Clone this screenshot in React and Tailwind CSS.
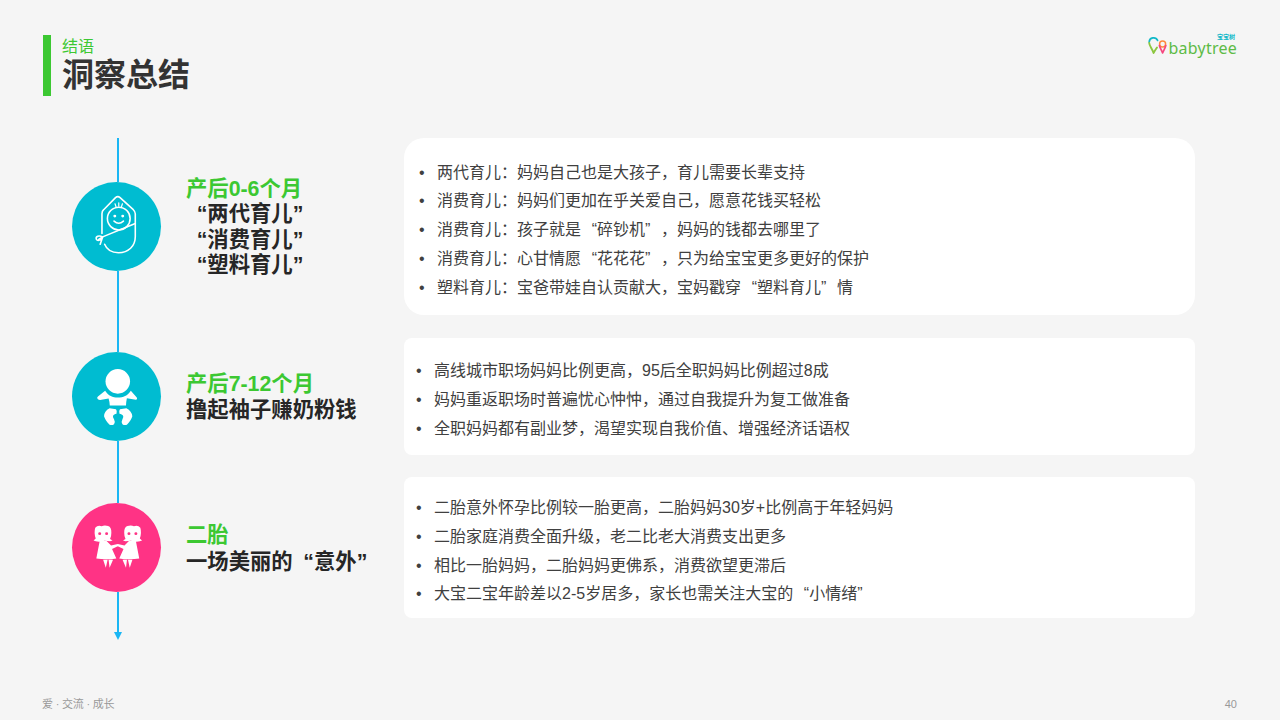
import React from 'react';

const SwaddleIcon = () => (
  <svg viewBox="0 0 90 90" className="w-full h-full" fill="none" stroke="#fff" strokeWidth="1.6" strokeLinecap="round" strokeLinejoin="round">
    <path d="M30.3 52 V32 Q30.3 29.5 32 28 L44 15.8 Q46.3 13.8 48.6 15.8 L62 28 Q64 30 64 32 V55 C64 65 57 71.5 47 71.5 C40 71.5 35 68 33 63" />
    <circle cx="47.3" cy="37" r="11.5" />
    <path d="M64 42 L31 55.5 L27 58" />
    <path d="M31 55.5 C27 53.5 24 55 24.5 57.5 C25 60 29 59.5 31 55.5 L28.5 63" />
    <path d="M42.5 39.5 Q47.3 44 52 39.5" />
    <path d="M43.5 22 L44.5 25 M47.3 21 V24.5 M51 22 L50 25" strokeWidth="1.2" />
    <circle cx="43.3" cy="34.5" r="0.7" fill="#fff" />
    <circle cx="51.3" cy="34.5" r="0.7" fill="#fff" />
  </svg>
);

const BabyIcon = () => (
  <svg viewBox="0 0 90 90" className="w-full h-full" fill="#fff">
    <circle cx="46.3" cy="29.7" r="12.4" />
    <path d="M33.5 39.2 C37 44.5 41 46 46.3 46 C52 46 56 44.5 59.5 39.2 L65.5 46 Q66.5 48 64.5 48.2 L55.5 46.8 Q54.8 50 54.6 54.2 H38.2 Q38 50 37 47 L28.5 48.5 Q25.5 48.5 25.5 46 Q26 44.8 27.5 44 Z" />
    <path d="M38 57 L44.5 58 Q46 60 45 62.5 C41.5 63 40.5 65 42.5 68 Q44 70.5 42.5 73 Q40.5 74.5 38 73.5 C35 71 33 67 32.4 65 Q32.5 60 38 57 Z" />
    <path d="M55 57 L48.5 58 Q47 60 48 62.5 C51.5 63 53 65 51 68 Q49.5 70.5 51 73 Q53 74.5 55.5 73.5 C58.5 71 60.5 67 61 65 Q60.5 60 55 57 Z" />
  </svg>
);

const Girl = ({ flip }) => (
  <g transform={flip ? 'translate(92.6 0) scale(-1 1)' : undefined}>
    <path d="M23.5 25 Q26 22 30 23.5 Q33 22 36.5 23.3 Q40 24.5 39.8 30 Q39.8 34 38.5 36.5 L41 37.8 L38.5 38.8 L33 38.2 Q28 39.8 24 38.8 L21.8 37.8 L24 36 Q22 30 23.5 25 Z" fill="#fff" />
    <path d="M28 38.5 H35 L39.5 43 L46.3 41.5 L46.8 43.5 L40.5 46.5 L44.8 56 Q35 57.8 24.6 56.2 Z" fill="#fff" />
    <path d="M31.5 57.5 L36 57.5 L34.2 65.5 Z M37 57.5 L41.5 57.5 L38 65.5 Z" fill="#fff" />
    <ellipse cx="28" cy="31" rx="1.5" ry="1.3" fill="#ff3385" />
    <ellipse cx="35" cy="31" rx="1.5" ry="1.3" fill="#ff3385" />
  </g>
);

const GirlsIcon = () => (
  <svg viewBox="0 0 90 90" className="w-full h-full">
    <Girl />
    <Girl flip />
  </svg>
);

const LogoMark = () => (
  <svg viewBox="0 0 21 19" className="w-[21px] h-[19px] shrink-0" fill="none" strokeLinecap="round" strokeLinejoin="round">
    <path d="M1.2 6 A4.4 4.4 0 0 1 9.6 4.4" stroke="#11b8c8" strokeWidth="1.7" />
    <path d="M1.2 7 C1.6 10.5 4 12 5.6 17 C6.6 14.5 8 13 9 11.5" stroke="#8cc63f" strokeWidth="1.9" />
    <circle cx="14.6" cy="8" r="3" stroke="#ff8a3c" strokeWidth="1.5" />
    <path d="M11.4 9.5 C12 12 13.6 14 14.6 17 C15.8 14 17.2 12 17.8 9.5" stroke="#f6467f" strokeWidth="1.7" />
  </svg>
);

const stages = [
  {
    color: 'bg-[#00bcd1]',
    icon: <SwaddleIcon />,
    head: '产后0-6个月',
    lines: ['“两代育儿”', '“消费育儿”', '“塑料育儿”'],
    leading: 'leading-[25.5px]',
    card: 'h-[177px] rounded-[20px] pl-[15px]',
    items: [
      '两代育儿：妈妈自己也是大孩子，育儿需要长辈支持',
      '消费育儿：妈妈们更加在乎关爱自己，愿意花钱买轻松',
      '消费育儿：孩子就是“碎钞机”，妈妈的钱都去哪里了',
      '消费育儿：心甘情愿“花花花”，只为给宝宝更多更好的保护',
      '塑料育儿：宝爸带娃自认贡献大，宝妈戳穿“塑料育儿”情',
    ],
  },
  {
    color: 'bg-[#00bcd1]',
    icon: <BabyIcon />,
    head: '产后7-12个月',
    lines: ['撸起袖子赚奶粉钱'],
    leading: 'leading-[25.5px]',
    card: 'h-[117px] rounded-[8px] pl-[12px]',
    items: [
      '高线城市职场妈妈比例更高，95后全职妈妈比例超过8成',
      '妈妈重返职场时普遍忧心忡忡，通过自我提升为复工做准备',
      '全职妈妈都有副业梦，渴望实现自我价值、增强经济话语权',
    ],
  },
  {
    color: 'bg-[#ff3385]',
    icon: <GirlsIcon />,
    head: '二胎',
    lines: ['一场美丽的“意外”'],
    leading: 'leading-[27px]',
    card: 'h-[141px] rounded-[8px] pl-[12px]',
    items: [
      '二胎意外怀孕比例较一胎更高，二胎妈妈30岁+比例高于年轻妈妈',
      '二胎家庭消费全面升级，老二比老大消费支出更多',
      '相比一胎妈妈，二胎妈妈更佛系，消费欲望更滞后',
      '大宝二宝年龄差以2-5岁居多，家长也需关注大宝的“小情绪”',
    ],
  },
];

// curly quotes sit in a full em box in the reference
const Quoted = ({ text }) =>
  text.split(/([“”])/).map((part, i) => {
    if (part === '“') return <span key={i} className="inline-block w-[1em] text-right">{part}</span>;
    if (part === '”') return <span key={i} className="inline-block w-[1em] text-left">{part}</span>;
    return <span key={i}>{part}</span>;
  });

const Line = ({ className }) => <div className={`w-[1.5px] bg-[#1ab6f4] ${className}`} />;

function Stage({ stage }) {
  return (
    <div className="flex items-stretch">
      {/* timeline column */}
      <div className="w-[90px] flex flex-col items-center shrink-0">
        <Line className="flex-1 ml-[2px]" />
        <div className={`w-[89px] h-[89px] mr-[1px] rounded-full ${stage.color}`}>{stage.icon}</div>
        <Line className="flex-1 ml-[2px]" />
      </div>

      <div className={`w-[219px] ml-[23px] pt-[2px] shrink-0 self-center font-bold text-[21.33px] text-[#262626] ${stage.leading}`}>
        <div className="text-[#3cc832] pl-[1px]">{stage.head}</div>
        {stage.lines.map((line) => (
          <div key={line} className="pl-[1px]"><Quoted text={line} /></div>
        ))}
      </div>

      <div className={`w-[791px] bg-white flex flex-col justify-center pt-[8px] text-[16px] leading-[28.7px] text-[#404040] ${stage.card}`}>
        {stage.items.map((item) => (
          <div key={item} className="flex">
            <span className="w-[18px] shrink-0">•</span>
            <span><Quoted text={item} /></span>
          </div>
        ))}
      </div>
    </div>
  );
}

export default function App() {
  return (
    <div className="w-[1280px] h-[720px] overflow-hidden bg-[#f5f5f5] flex flex-col font-['Liberation_Sans','Noto_Sans_CJK_SC',sans-serif]">

      {/* header */}
      <div className="h-[138px] shrink-0 pl-[43px] pr-[43px] pt-[35px] flex justify-between items-start">
        <div className="flex h-[61px]">
          <div className="w-[8px] bg-[#3cc832]" />
          <div className="ml-[11px]">
            <div className="mt-[2px] text-[16px] leading-[20px] text-[#3cc832]">结语</div>
            <div className="text-[32px] leading-[36px] font-bold text-[#333333]">洞察总结</div>
          </div>
        </div>
        <div className="flex items-start mt-[1px] relative">
          <LogoMark />
          <span className="font-['Noto_Sans'] -ml-[1px] mt-[3px] text-[16px] leading-[18px] tracking-[0.25px] text-[#5dbb46]">babytree</span>
          <span className="absolute right-[2px] -top-[2px] text-[6px] leading-[7px] font-bold text-[#11b8c8]">宝宝树</span>
        </div>
      </div>

      {/* timeline rows */}
      <div className="pl-[72px] flex flex-col">
        <Stage stage={stages[0]} />
        <Line className="h-[23px] ml-[45.25px]" />
        <Stage stage={stages[1]} />
        <Line className="h-[22px] ml-[45.25px]" />
        <Stage stage={stages[2]} />
        <Line className="h-[14px] ml-[45.25px]" />
        <div className="ml-[42px] w-0 h-0 border-l-[4px] border-r-[4px] border-t-[8px] border-l-transparent border-r-transparent border-t-[#1ab6f4]" />
      </div>

      {/* footer */}
      <div className="mt-auto h-[24px] pl-[42px] pr-[43px] flex justify-between text-[11px] leading-[16px] text-[#999999]">
        <span className="tracking-[-0.2px]">爱 · 交流 · 成长</span>
        <span>40</span>
      </div>
    </div>
  );
}
